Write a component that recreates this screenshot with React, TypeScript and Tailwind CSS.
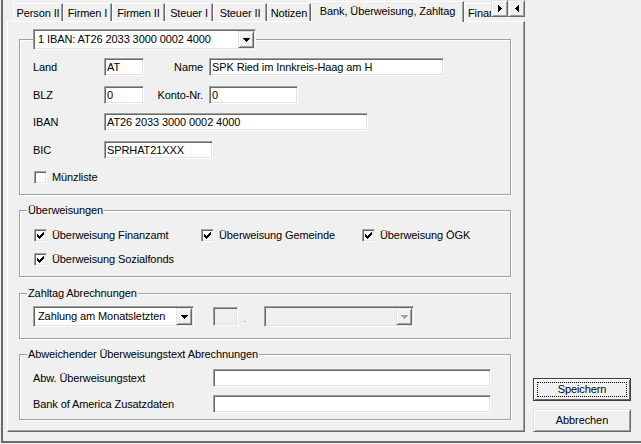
import React from 'react';

// Klassische Win32-Kanten
const sunken =
  'border border-t-[#a0a0a0] border-l-[#a0a0a0] border-r-white border-b-white shadow-[inset_1px_1px_0_#696969,inset_-1px_-1px_0_#e3e3e3]';
const raised =
  'border border-t-[#e3e3e3] border-l-[#e3e3e3] border-r-[#696969] border-b-[#696969] shadow-[inset_1px_1px_0_#fff,inset_-1px_-1px_0_#a0a0a0]';
const etched = 'border border-[#a0a0a0] shadow-[inset_1px_1px_0_#fff,1px_1px_0_#fff]';

function CheckMark() {
  const rows: [number, number, number][] = [
    [0, 6, 1], [1, 5, 2], [2, 0, 1], [2, 4, 3], [3, 0, 2], [3, 3, 3], [4, 0, 5], [5, 1, 3], [6, 2, 1],
  ];
  return (
    <svg width="7" height="7" viewBox="0 0 7 7" shapeRendering="crispEdges">
      {rows.map(([y, x, w], i) => <rect key={i} x={x} y={y} width={w} height={1} fill="#000" />)}
    </svg>
  );
}

function Check({ checked, label }: { checked?: boolean; label: string }) {
  return (
    <div className="flex items-center">
      <span className={`w-[13px] h-[13px] bg-white shrink-0 flex items-center justify-center ${sunken}`}>
        {checked && <CheckMark />}
      </span>
      <span className="ml-[5px] whitespace-nowrap">{label}</span>
    </div>
  );
}

function Tri({ dir, color = '#000' }: { dir: 'down' | 'left' | 'right'; color?: string }) {
  if (dir === 'down')
    return (
      <svg width="7" height="4" viewBox="0 0 7 4" shapeRendering="crispEdges">
        <rect x="0" y="0" width="7" height="1" fill={color} />
        <rect x="1" y="1" width="5" height="1" fill={color} />
        <rect x="2" y="2" width="3" height="1" fill={color} />
        <rect x="3" y="3" width="1" height="1" fill={color} />
      </svg>
    );
  const xs = dir === 'left' ? [3, 2, 1, 0] : [0, 1, 2, 3];
  return (
    <svg width="4" height="7" viewBox="0 0 4 7" shapeRendering="crispEdges">
      <rect x={xs[0]} y="3" width="1" height="1" fill={color} />
      <rect x={xs[1]} y="2" width="1" height="3" fill={color} />
      <rect x={xs[2]} y="1" width="1" height="5" fill={color} />
      <rect x={xs[3]} y="0" width="1" height="7" fill={color} />
    </svg>
  );
}

function Combo({ text, width, disabled }: { text?: string; width: string; disabled?: boolean }) {
  return (
    <div className={`${width} h-[21px] shrink-0 flex items-center pl-[4px] pr-px ${disabled ? 'bg-[#f0f0f0]' : 'bg-white'} ${sunken}`}>
      <span className="flex-1 whitespace-nowrap overflow-hidden">{text}</span>
      <span className={`w-[16px] h-[17px] flex items-center justify-center bg-[#f0f0f0] ${raised}`}>
        <Tri dir="down" color={disabled ? '#a0a0a0' : '#000'} />
      </span>
    </div>
  );
}

function Field({ value, width }: { value?: string; width: string }) {
  return (
    <div className={`${width} h-[18px] shrink-0 bg-white flex items-center pl-[2px] whitespace-nowrap overflow-hidden ${sunken}`}>
      {value}
    </div>
  );
}

function Group({ title, height, children }: { title?: string; height: string; children: React.ReactNode }) {
  return (
    <div className={`ml-[11px] w-[492px] ${height} flex flex-col ${etched}`}>
      {title && (
        <span className="self-start ml-[7px] -mt-[7px] px-px h-[13px] bg-[#f0f0f0] whitespace-nowrap">{title}</span>
      )}
      {children}
    </div>
  );
}

const tabs = [
  { label: 'Person II', w: 'w-[50px]' },
  { label: 'Firmen I', w: 'w-[49px]' },
  { label: 'Firmen II', w: 'w-[53px]' },
  { label: 'Steuer I', w: 'w-[48px]' },
  { label: 'Steuer II', w: 'w-[54px]' },
  { label: 'Notizen', w: 'w-[44px]' },
];

function TabStrip() {
  return (
    <div className="h-[21px] flex items-end pl-[6px]">
      {tabs.map((t) => (
        <div
          key={t.label}
          className={`${t.w} h-[18px] shrink-0 flex items-center justify-center pt-px whitespace-nowrap border-t border-l border-white border-r border-r-[#696969] shadow-[inset_-1px_0_0_#a0a0a0] rounded-tl-[2px]`}
        >
          {t.label}
        </div>
      ))}
      <div className="w-[153px] h-[21px] -mb-px shrink-0 relative z-10 bg-[#f0f0f0] flex items-center justify-center pb-px whitespace-nowrap border-t border-l border-white border-r border-r-[#696969] shadow-[inset_-1px_0_0_#a0a0a0] rounded-tl-[2px]">
        Bank, Überweisung, Zahltag
      </div>
      <div className="w-[27px] h-[18px] shrink-0 flex items-center pl-[3px] pt-px whitespace-nowrap border-t border-l border-white rounded-tl-[2px]">
        Finar
      </div>
      <div className="self-start flex">
        <span className={`w-[17px] h-[17px] flex items-center justify-center bg-[#f0f0f0] ${raised}`}>
          <Tri dir="left" />
        </span>
        <span className={`w-[17px] h-[17px] flex items-center justify-center bg-[#f0f0f0] ${raised}`}>
          <Tri dir="right" />
        </span>
      </div>
    </div>
  );
}

export default function App() {
  return (
    <div className="w-[641px] h-[444px] bg-[#f0f0f0] pl-px overflow-hidden font-['Liberation_Sans',Arial,sans-serif] text-[11px] leading-[13px] tracking-[-0.1px] text-black">
      <div className="h-[443px] border-l-2 border-b-2 border-[#6b6b6b] flex">
        {/* Registerkarten */}
        <div className="ml-[4px] w-[518px] flex flex-col">
          <TabStrip />
          <div className="h-[411px] border-t border-l border-white border-r border-b border-r-[#696969] border-b-[#696969] shadow-[inset_-1px_-1px_0_#a0a0a0]">
            <div className="mt-[17px]" />

            {/* Bankverbindung */}
            <Group height="h-[156px]">
              <div className="ml-[13px] -mt-[11px]">
                <Combo text="1 IBAN: AT26 2033 3000 0002 4000" width="w-[223px]" />
              </div>
              <div className="mt-[8px] h-[18px] flex items-center pl-[13px]">
                <span className="w-[71px]">Land</span>
                <Field value="AT" width="w-[40px]" />
                <span className="w-[59px] text-right">Name</span>
                <span className="ml-[6px]"><Field value="SPK Ried im Innkreis-Haag am H" width="w-[235px]" /></span>
              </div>
              <div className="mt-[10px] h-[18px] flex items-center pl-[13px]">
                <span className="w-[71px]">BLZ</span>
                <Field value="0" width="w-[40px]" />
                <span className="w-[59px] text-right">Konto-Nr.</span>
                <span className="ml-[6px]"><Field value="0" width="w-[89px]" /></span>
              </div>
              <div className="mt-[9px] h-[18px] flex items-center pl-[13px]">
                <span className="w-[71px]">IBAN</span>
                <Field value="AT26 2033 3000 0002 4000" width="w-[264px]" />
              </div>
              <div className="mt-[10px] h-[18px] flex items-center pl-[13px]">
                <span className="w-[71px]">BIC</span>
                <Field value="SPRHAT21XXX" width="w-[109px]" />
              </div>
              <div className="mt-[12px] h-[13px] flex items-center pl-[14px]">
                <Check label="Münzliste" />
              </div>
            </Group>

            {/* Überweisungen */}
            <div className="mt-[15px]" />
            <Group title="Überweisungen" height="h-[67px]">
              <div className="mt-[12px] h-[13px] flex items-center pl-[14px]">
                <div className="w-[167px]"><Check checked label="Überweisung Finanzamt" /></div>
                <div className="w-[161px]"><Check checked label="Überweisung Gemeinde" /></div>
                <div><Check checked label="Überweisung ÖGK" /></div>
              </div>
              <div className="mt-[11px] h-[13px] flex items-center pl-[14px]">
                <Check checked label="Überweisung Sozialfonds" />
              </div>
            </Group>

            {/* Zahltag */}
            <div className="mt-[16px]" />
            <Group title="Zahltag Abrechnungen" height="h-[46px]">
              <div className="mt-[6px] h-[21px] flex items-center pl-[13px]">
                <Combo text="Zahlung am Monatsletzten" width="w-[161px]" />
                <div className={`ml-[19px] w-[25px] h-[19px] bg-[#f0f0f0] ${sunken}`} />
                <span className="w-[26px] pl-[5px] self-end pb-[2px] text-[#a0a0a0]">.</span>
                <Combo width="w-[150px]" disabled />
              </div>
            </Group>

            {/* Abweichender Text */}
            <div className="mt-[15px]" />
            <Group title="Abweichender Überweisungstext Abrechnungen" height="h-[66px]">
              <div className="mt-[8px] h-[18px] flex items-center pl-[13px]">
                <span className="w-[180px]">Abw. Überweisungstext</span>
                <Field width="w-[278px]" />
              </div>
              <div className="mt-[8px] h-[18px] flex items-center pl-[13px]">
                <span className="w-[180px]">Bank of America Zusatzdaten</span>
                <Field width="w-[278px]" />
              </div>
            </Group>
          </div>
        </div>

        {/* Schaltflächen */}
        <div className="ml-[8px] w-[98px] flex flex-col justify-end gap-[8px] pb-[9px]">
          <div className="h-[23px] border border-[#3c3c3c] bg-[#f0f0f0] shadow-[inset_1px_1px_0_#fff,inset_-1px_-1px_0_#696969] flex p-[3px]">
            <div className="flex-1 border border-dotted border-black flex items-center justify-center">Speichern</div>
          </div>
          <div className={`h-[23px] bg-[#f0f0f0] flex items-center justify-center ${raised}`}>Abbrechen</div>
        </div>
      </div>
    </div>
  );
}
